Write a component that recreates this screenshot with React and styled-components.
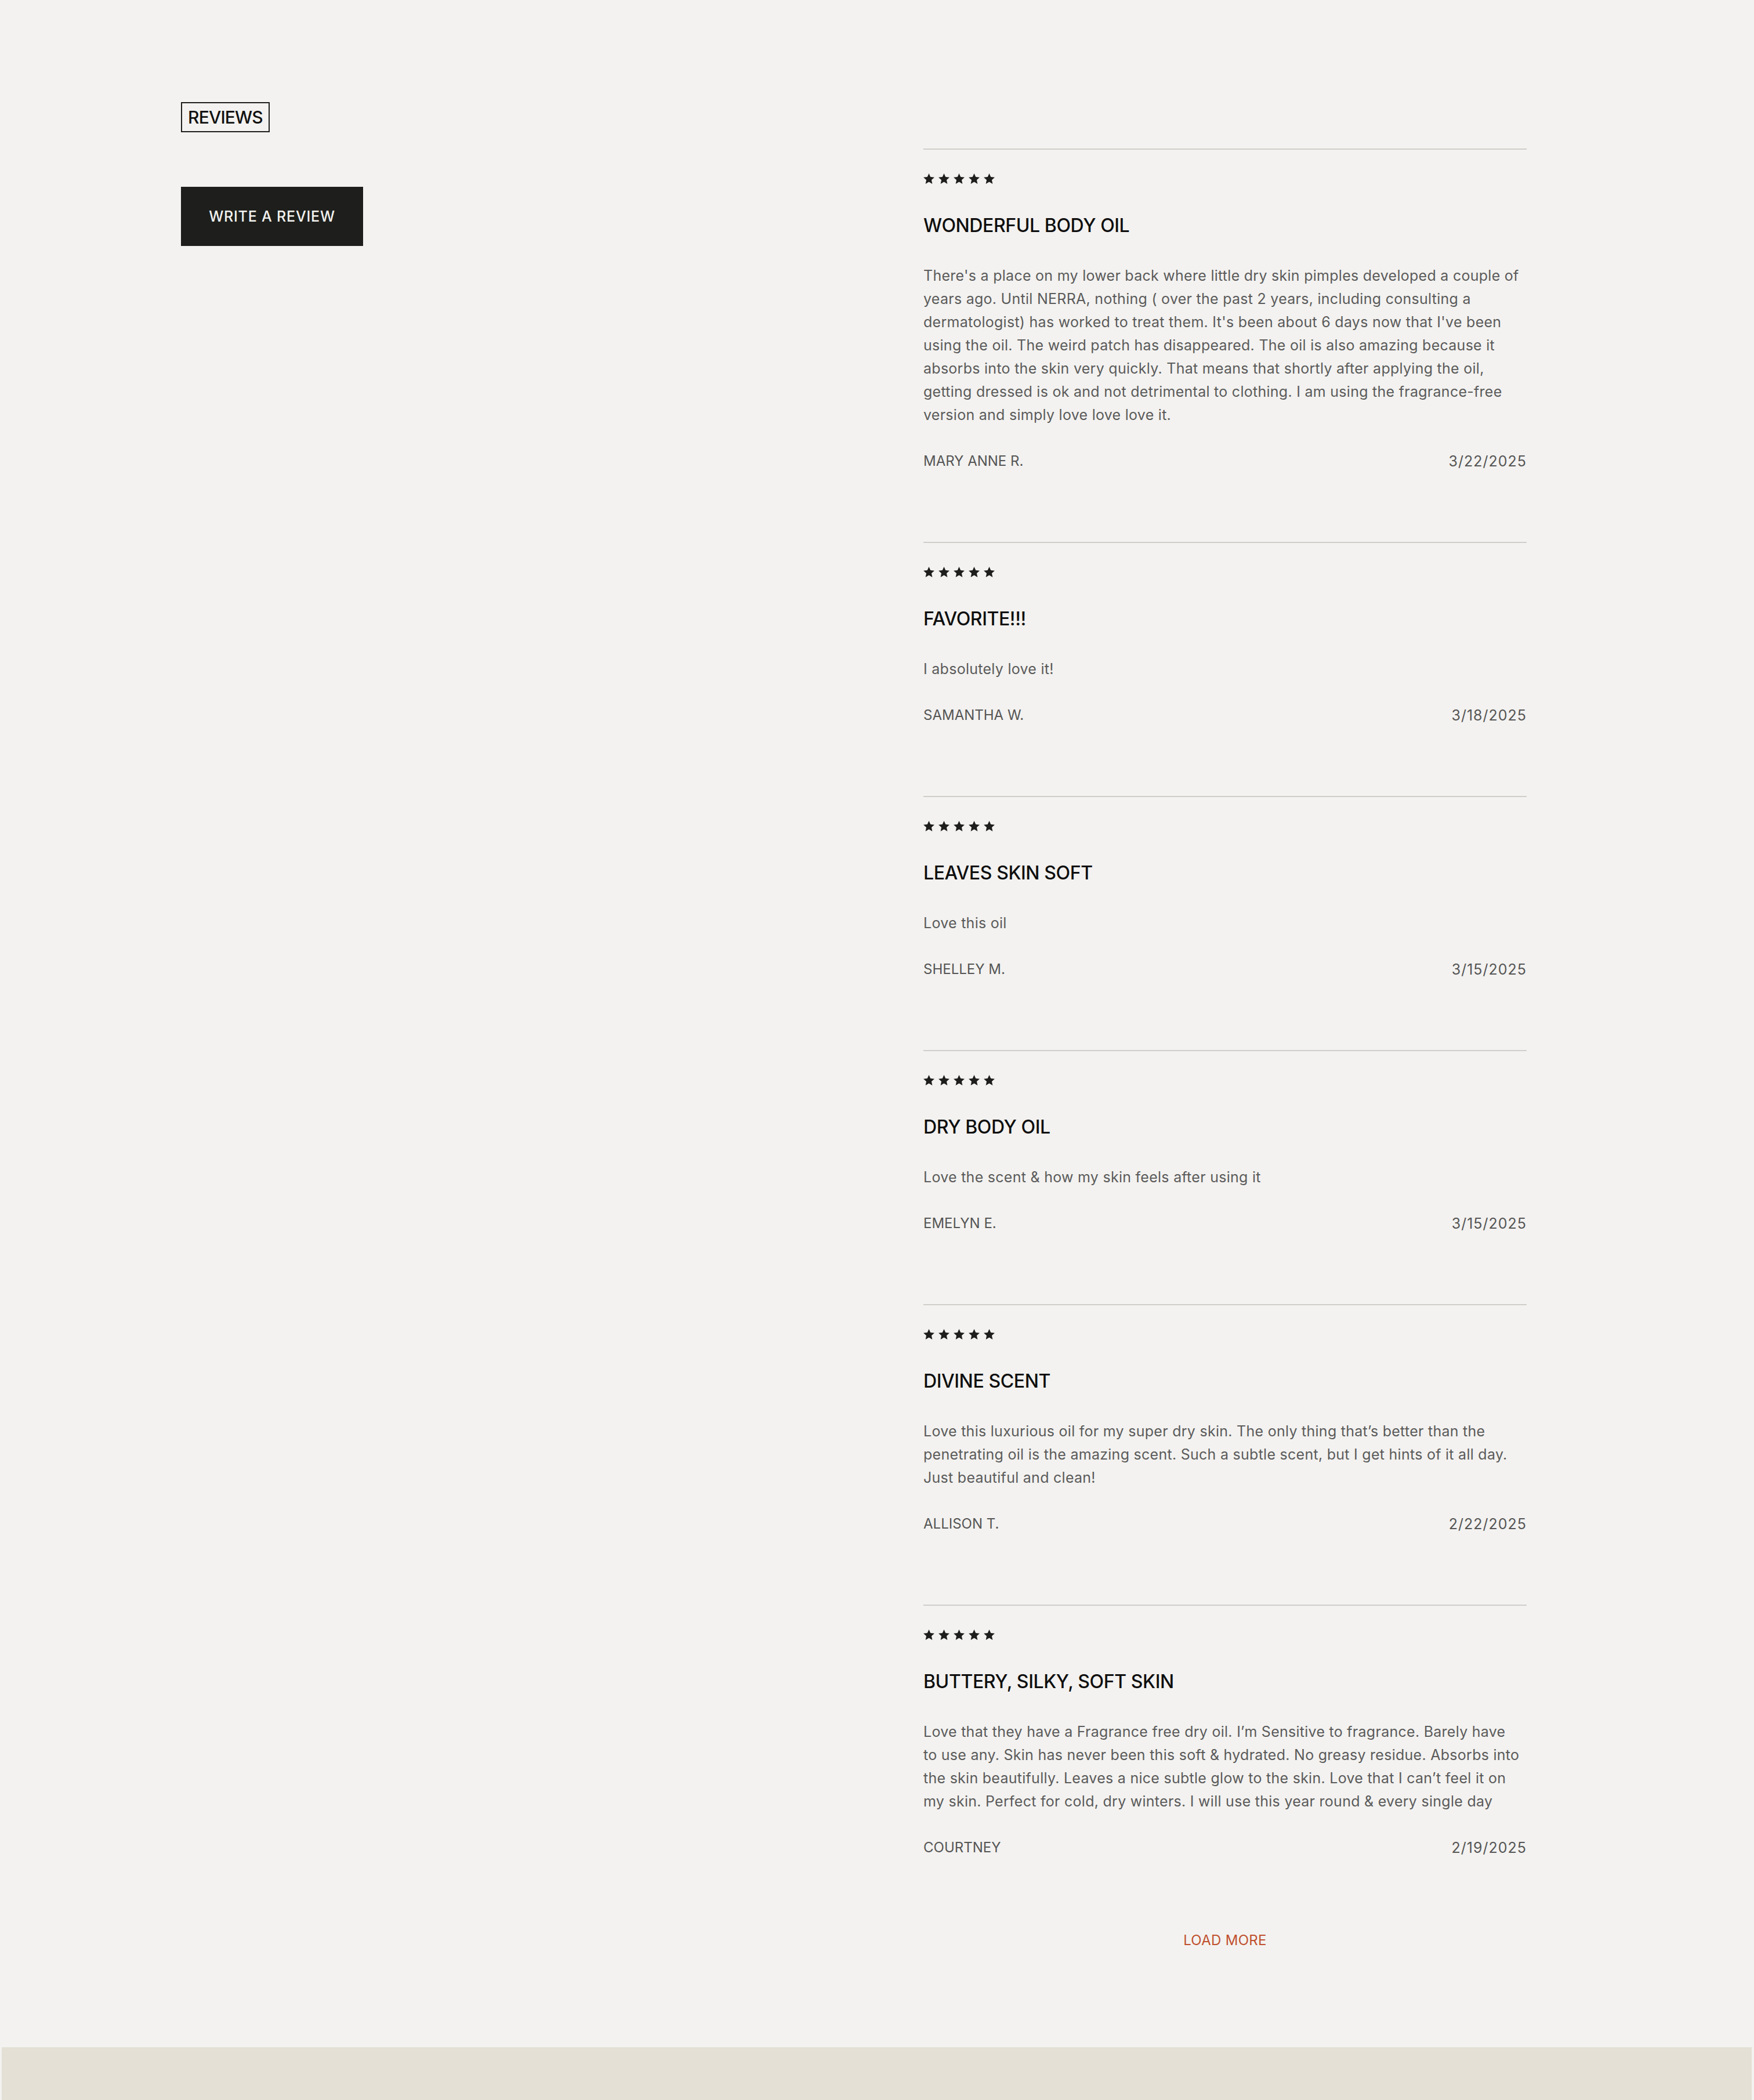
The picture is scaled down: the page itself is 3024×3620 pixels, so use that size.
import React from 'react'
import styled, { createGlobalStyle } from 'styled-components'

const reviews = [
  {
    title: 'Wonderful body oil',
    body: "There's a place on my lower back where little dry skin pimples developed a couple of\nyears ago. Until NERRA, nothing ( over the past 2 years, including consulting a\ndermatologist) has worked to treat them. It's been about 6 days now that I've been\nusing the oil. The weird patch has disappeared. The oil is also amazing because it\nabsorbs into the skin very quickly. That means that shortly after applying the oil,\ngetting dressed is ok and not detrimental to clothing. I am using the fragrance-free\nversion and simply love love love it.",
    author: 'Mary Anne R.',
    date: '3/22/2025',
  },
  { title: 'Favorite!!!', body: 'I absolutely love it!', author: 'Samantha W.', date: '3/18/2025' },
  { title: 'Leaves skin soft', body: 'Love this oil', author: 'Shelley M.', date: '3/15/2025' },
  {
    title: 'Dry body oil',
    body: 'Love the scent & how my skin feels after using it',
    author: 'Emelyn E.',
    date: '3/15/2025',
  },
  {
    title: 'Divine scent',
    body: 'Love this luxurious oil for my super dry skin. The only thing that’s better than the\npenetrating oil is the amazing scent. Such a subtle scent, but I get hints of it all day.\nJust beautiful and clean!',
    author: 'Allison T.',
    date: '2/22/2025',
  },
  {
    title: 'Buttery, silky, soft skin',
    body: 'Love that they have a Fragrance free dry oil. I’m Sensitive to fragrance. Barely have\nto use any. Skin has never been this soft & hydrated. No greasy residue. Absorbs into\nthe skin beautifully. Leaves a nice subtle glow to the skin. Love that I can’t feel it on\nmy skin. Perfect for cold, dry winters. I will use this year round & every single day',
    author: 'Courtney',
    date: '2/19/2025',
  },
]

function Star() {
  return (
    <svg viewBox="0 0 20 19" width="19" height="18" aria-hidden="true">
      <polygon points="10,0 12.9,6.4 20,7.2 14.7,12 16.2,19 10,15.4 3.8,19 5.3,12 0,7.2 7.1,6.4" fill="currentColor" />
    </svg>
  )
}

function Review({ review }) {
  return (
    <ReviewItem>
      <Stars>
        {[0, 1, 2, 3, 4].map((i) => <Star key={i} />)}
      </Stars>
      <ReviewTitle>{review.title}</ReviewTitle>
      <ReviewBody>{review.body}</ReviewBody>
      <Meta>
        <Author>{review.author}</Author>
        <DateText>{review.date}</DateText>
      </Meta>
    </ReviewItem>
  )
}

export default function App() {
  return (
    <>
      <GlobalStyle />
      <Page>
        <LeftCol>
          <SectionTag>Reviews</SectionTag>
          <WriteButton>Write a review</WriteButton>
        </LeftCol>
        <RightCol>
          <ReviewList>
            {reviews.map((r) => <Review key={r.author} review={r} />)}
          </ReviewList>
          <LoadMore>Load more</LoadMore>
        </RightCol>
      </Page>
      <FooterBand />
    </>
  )
}

const GlobalStyle = createGlobalStyle`
  body {
    margin: 0;
    background: #f3f2f0;
    font-family: Inter, "Liberation Sans", sans-serif;
    -webkit-font-smoothing: antialiased;
  }
`

const Page = styled.main`
  display: grid;
  grid-template-columns: 1fr 1040px;
  padding: 176px 392px 0 312px;
`

const LeftCol = styled.div`
  display: flex;
  flex-direction: column;
  align-items: flex-start;
  gap: 94px;
`

const SectionTag = styled.h2`
  margin: 0;
  padding: 0 10px;
  border: 2px solid #1e1f1c;
  font-size: 30px;
  font-weight: 500;
  line-height: 48px;
  color: #111;
  text-transform: uppercase;
  letter-spacing: -0.8px;
`

const WriteButton = styled.button`
  width: 314px;
  height: 102px;
  border: none;
  background: #1e1f1c;
  color: #f3f2f0;
  font-family: inherit;
  font-size: 25px;
  font-weight: 500;
  letter-spacing: 0.8px;
  text-transform: uppercase;
`

const RightCol = styled.section`
  padding-top: 80px;
  display: flex;
  flex-direction: column;
`

const ReviewList = styled.div`
  display: flex;
  flex-direction: column;
`

const ReviewItem = styled.article`
  border-top: 2px solid #cfcecb;
  padding-bottom: 119px;

  &:last-child {
    padding-bottom: 120px;
  }
`

const Stars = styled.div`
  display: flex;
  gap: 7px;
  margin-top: 41px;
  color: #1e1f1c;
`

const ReviewTitle = styled.h3`
  margin: 52px 0 0;
  font-size: 32px;
  font-weight: 500;
  line-height: 40px;
  color: #0e0e0e;
  text-transform: uppercase;
  letter-spacing: -0.4px;
`

const ReviewBody = styled.p`
  margin: 46px 0 0;
  font-size: 25px;
  line-height: 40px;
  color: #5b5b5b;
  letter-spacing: 0.27px;
  white-space: pre-line;
`

const Meta = styled.div`
  display: flex;
  justify-content: space-between;
  margin-top: 40px;
  font-size: 25px;
  line-height: 40px;
  color: #555;
  text-transform: uppercase;
`

const Author = styled.span`
  font-size: 24px;
  letter-spacing: 0;
`

const DateText = styled.span`
  letter-spacing: 1px;
`

const LoadMore = styled.button`
  align-self: center;
  padding: 0;
  border: none;
  background: none;
  font-family: inherit;
  font-size: 24px;
  line-height: 40px;
  color: #c0502e;
  letter-spacing: 0.3px;
  text-transform: uppercase;
`

const FooterBand = styled.footer`
  margin: 164px 4px 0 3px;
  height: 92px;
  background: #e4e0d5;
`
